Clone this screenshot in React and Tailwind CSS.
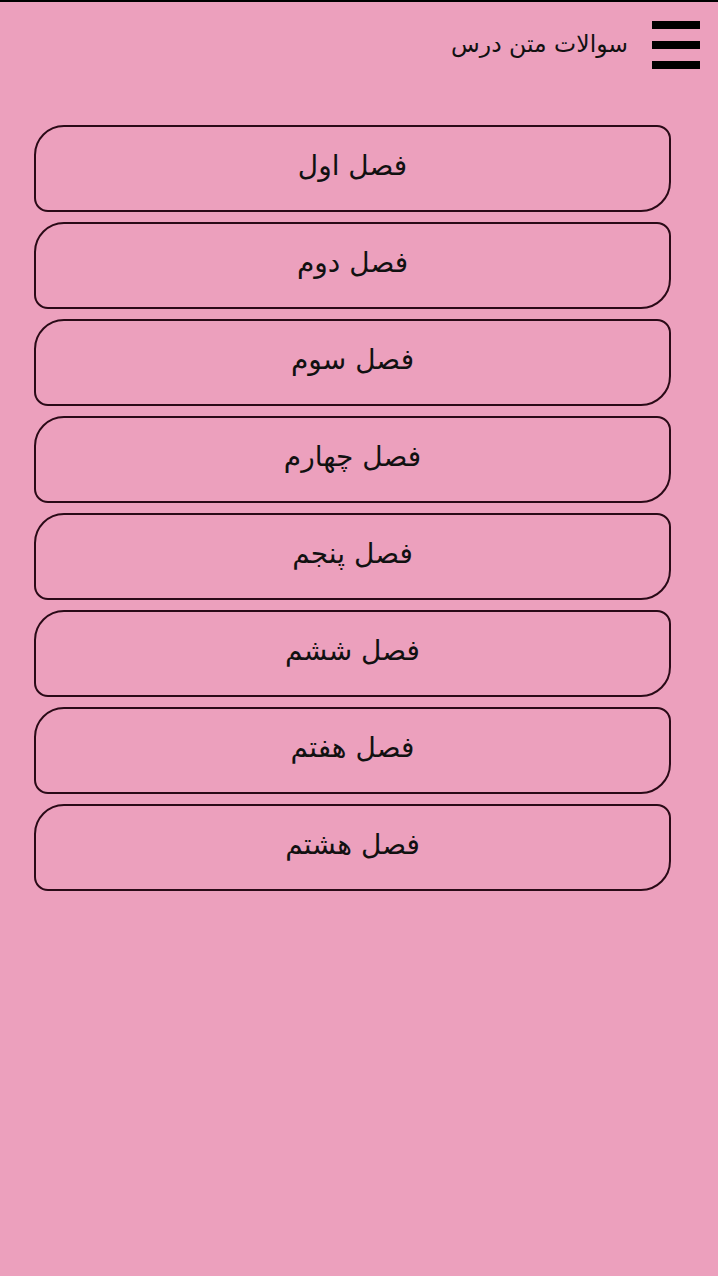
const chapters = [
  "فصل اول",
  "فصل دوم",
  "فصل سوم",
  "فصل چهارم",
  "فصل پنجم",
  "فصل ششم",
  "فصل هفتم",
  "فصل هشتم",
];

export default function App() {
  return (
    <div
      dir="rtl"
      className="min-h-[1276px] w-full border-t-2 border-black bg-[#eca0bd] text-[#111]"
      style={{ fontFamily: '"DejaVu Sans", "Noto Sans", sans-serif' }}
    >
      <header className="flex h-[88px] items-start gap-[24px] pr-[18px] pt-[18px]">
        <button type="button" aria-label="menu" className="flex w-[48px] flex-col gap-[12px] pt-[1px]">
          <span className="block h-[8px] w-full bg-black" />
          <span className="block h-[8px] w-full bg-black" />
          <span className="block h-[8px] w-full bg-black" />
        </button>
        <h1 className="pt-[13px] text-[23.5px] leading-none">سوالات متن درس</h1>
      </header>

      <main className="flex flex-col gap-[10px] pl-[34px] pr-[47px] pt-[35px]">
        {chapters.map((title) => (
          <button
            key={title}
            type="button"
            className="flex h-[87px] items-center justify-center rounded-tl-[30px] rounded-br-[30px] rounded-tr-[14px] rounded-bl-[14px] border-2 border-[#2a0a17] pb-[5px] text-[28px]"
          >
            {title}
          </button>
        ))}
      </main>
    </div>
  );
}
